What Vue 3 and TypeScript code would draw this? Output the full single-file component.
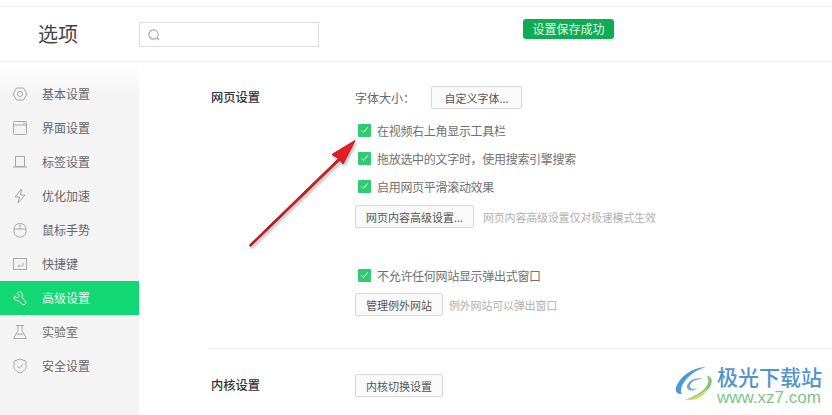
<script setup lang="ts">
interface NavItem { label: string; icon: string; active?: boolean }
const nav: NavItem[] = [
  { label: '基本设置', icon: 'base' },
  { label: '界面设置', icon: 'window' },
  { label: '标签设置', icon: 'tab' },
  { label: '优化加速', icon: 'bolt' },
  { label: '鼠标手势', icon: 'mouse' },
  { label: '快捷键', icon: 'key' },
  { label: '高级设置', icon: 'wrench', active: true },
  { label: '实验室', icon: 'flask' },
  { label: '安全设置', icon: 'shield' },
]
</script>

<template>
  <div class="page">
    <header class="top">
      <h1 class="title">选项</h1>
      <div class="search">
        <svg width="14" height="14" viewBox="0 0 14 14" fill="none" stroke="#a8a8a8" stroke-width="1.2">
          <circle cx="6.5" cy="6.5" r="4.6" />
          <path d="M10 10l2 2" />
        </svg>
      </div>
    </header>
    <div class="toast">设置保存成功</div>
    <div class="body">
      <aside class="side">
        <div v-for="item in nav" :key="item.label" class="nav" :class="{ active: item.active }">
          <svg class="ico" width="16" height="16" viewBox="0 0 16 16" fill="none" stroke="currentColor" stroke-width="1">
            <template v-if="item.icon === 'base'">
              <path d="M4.5 2h7L15 8l-3.500 6h-7L1 8z" />
              <circle cx="8" cy="8" r="2.500" />
            </template>
            <template v-else-if="item.icon === 'window'">
              <rect x="1.500" y="1.500" width="13" height="13" rx="1" />
              <path d="M1.500 5h13M11 3.300h2" />
            </template>
            <template v-else-if="item.icon === 'tab'">
              <path d="M3.500 2.500h9v10h-9zM1 13h14" />
            </template>
            <template v-else-if="item.icon === 'bolt'">
              <path d="M9.500 1L3 9h4.500L6 15l7-8H8.500z" />
            </template>
            <template v-else-if="item.icon === 'mouse'">
              <rect x="2" y="1.500" width="12" height="13.500" rx="5.500" />
              <path d="M2 7h12M8 1.500V7" />
            </template>
            <template v-else-if="item.icon === 'key'">
              <rect x="1.500" y="2.500" width="13" height="11" />
              <path d="M11 7v3H6M7.500 8.500L6 10l1.500 1" stroke-width=".8" />
            </template>
            <template v-else-if="item.icon === 'wrench'">
              <path d="M6 1.500L4 3.500l2.500 2.500-2.500 2L1.500 6c-1 3 1 5 3.500 4.500L9.500 14.500c1.500 1 3.500-.5 3.500-2.500L9 7.500C10 4 8.500 1.500 6 1.500z" transform="translate(1 0)" />
            </template>
            <template v-else-if="item.icon === 'flask'">
              <path d="M4 1.500h8M6 1.500v5L1.500 14.500h13L10 6.500v-5M4.500 10h7" />
            </template>
            <template v-else>
              <path d="M8 1l6 2.200v5.300c0 3-3 5.500-6 6.500-3-1-6-3.500-6-6.500V3.200z" />
              <path d="M5 8l2.200 2.200L11 6.500" />
            </template>
          </svg>
          <span class="nav-t">{{ item.label }}</span>
        </div>
      </aside>
      <main class="main">
        <section class="section first">
          <h2 class="heading">网页设置</h2>
          <div class="controls">
            <div class="row font">
              <span class="lab">字体大小：</span>
              <button class="btn w91">自定义字体...</button>
            </div>
            <label class="check"><i class="box"><svg width="9" height="8" viewBox="0 0 9 8" fill="none" stroke="#fff" stroke-width="1"><path d="M1 4l2.500 2.500L8 1" /></svg></i>在视频右上角显示工具栏</label>
            <label class="check"><i class="box"><svg width="9" height="8" viewBox="0 0 9 8" fill="none" stroke="#fff" stroke-width="1"><path d="M1 4l2.500 2.500L8 1" /></svg></i>拖放选中的文字时，使用搜索引擎搜索</label>
            <label class="check"><i class="box"><svg width="9" height="8" viewBox="0 0 9 8" fill="none" stroke="#fff" stroke-width="1"><path d="M1 4l2.500 2.500L8 1" /></svg></i>启用网页平滑滚动效果</label>
            <div class="row adv">
              <button class="btn w119">网页内容高级设置...</button>
              <span class="hint">网页内容高级设置仅对极速模式生效</span>
            </div>
            <label class="check popup"><i class="box"><svg width="9" height="8" viewBox="0 0 9 8" fill="none" stroke="#fff" stroke-width="1"><path d="M1 4l2.500 2.500L8 1" /></svg></i>不允许任何网站显示弹出式窗口</label>
            <div class="row exc">
              <button class="btn w88">管理例外网站</button>
              <span class="hint">例外网站可以弹出窗口</span>
            </div>
          </div>
        </section>
        <section class="section kernel">
          <h2 class="heading">内核设置</h2>
          <div class="controls">
            <button class="btn w88">内核切换设置</button>
          </div>
        </section>
      </main>
    </div>
    <svg class="arrow" width="130" height="120" viewBox="240 130 130 120">
      <defs>
        <linearGradient id="ag" x1="0" y1="1" x2="1" y2="0">
          <stop offset="0" stop-color="#a81a1e" />
          <stop offset="1" stop-color="#f01c24" />
        </linearGradient>
        <filter id="as" x="-20%" y="-20%" width="140%" height="140%">
          <feDropShadow dx="1.500" dy="2" stdDeviation="1.500" flood-color="#000" flood-opacity=".3" />
        </filter>
      </defs>
      <path d="M249.500 245L338.500 158.500L332 154.500L355 140.500L343 164L340 160L250.500 246.500z" fill="url(#ag)" stroke="#b8181d" stroke-width="1" stroke-linejoin="round" filter="url(#as)" />
    </svg>
    <div class="mark">
      <svg width="44" height="42" viewBox="0 0 56 48" preserveAspectRatio="none" fill="none">
        <path d="M40 3C22 4 6 14 1 27c-1 5 3 8 8 7C4 28 14 10 40 3z" fill="#4a9bd4" />
        <path d="M15 26c2-8 12-11 21-9-9 0-16 3-17 8 0 4 6 4 9 2-3 4-12 5-13-1z" fill="#6aa9d8" />
        <path d="M40 13c6 1 9 5 5 12-4 8-18 14-33 16 14-4 27-11 30-19 1-4 0-7-2-9z" fill="#7cc67a" />
        <path d="M12 41c12-2 24-7 30-15-3 10-14 17-30 15z" fill="#d9d96a" />
      </svg>
      <div class="mark-t">
        <div class="mark-cn">极光下载站</div>
        <div class="mark-en">www.xz7.com</div>
      </div>
    </div>
  </div>
</template>

<style>
html, body { margin: 0; padding: 0; background: #fff; overflow: hidden; }
</style>

<style scoped>
.page {
  position: relative;
  width: 832px;
  height: 415px;
  overflow: hidden;
  background: #fff;
  font-family: "Noto Sans CJK SC", "Liberation Sans", sans-serif;
  font-size: 12px;
  color: #555;
}
.top {
  box-sizing: border-box;
  height: 56px;
  margin-top: 6px;
  border-top: 1px solid #eee;
  border-bottom: 1px solid #eee;
  display: flex;
  align-items: center;
  padding-left: 38px;
}
.title { margin: -1px 0 0; width: 101px; font-size: 20px; font-weight: 400; color: #444; line-height: 28px; }
.search {
  box-sizing: border-box;
  width: 180px;
  height: 25px;
  margin-top: 1px;
  border: 1px solid #ddd;
  display: flex;
  align-items: center;
  padding-left: 7px;
}
.toast {
  position: absolute;
  left: 523px;
  top: 19px;
  width: 91px;
  height: 20px;
  border-radius: 3px;
  background: #10ac53;
  color: #e4f6ea;
  text-align: center;
  line-height: 20px;
}
.body { display: flex; height: 353px; }
.side {
  width: 139px;
  padding-top: 15px;
  background: linear-gradient(#fff 0, #f4f4f4 34px);
  flex: none;
}
.nav {
  height: 34px;
  display: flex;
  align-items: center;
  padding-left: 12px;
  gap: 14px;
  color: #666;
}
.nav-t { margin-bottom: 2px; }
.ico { color: #a6a6a6; flex: none; }
.nav.active { background: #12d873; color: #e8fbf0; }
.nav.active .ico { color: #e8fbf0; }
.main { flex: 1; padding-left: 69px; }
.section { display: flex; }
.first { padding: 24px 0 32px 3px; border-bottom: 1px solid #f1f1f1; }
.kernel { padding: 25px 0 0 3px; }
.heading {
  margin: 0;
  width: 144px;
  flex: none;
  font-size: 12.25px;
  font-weight: 500;
  color: #333;
  line-height: 23px;
}
.controls { display: flex; flex-direction: column; align-items: flex-start; }
.row { display: flex; align-items: center; }
.font .lab { width: 76px; color: #666; }
.btn {
  box-sizing: border-box;
  height: 23px;
  padding: 0;
  border: 1px solid #d8d8d8;
  border-radius: 2px;
  background: #fafafa;
  font: inherit;
  font-size: 11px;
  color: #555;
}
.w91 { width: 91px; }
.w119 { width: 119px; }
.w88 { width: 88px; }
.check {
  height: 28px;
  display: flex;
  align-items: center;
  padding-left: 3px;
  gap: 6px;
  color: #707070;
  letter-spacing: -.3px;
}
.font + .check { margin-top: 7px; }
.box {
  width: 13px;
  height: 13px;
  background: #2ecc71;
  display: flex;
  align-items: center;
  justify-content: center;
  border-radius: 1px;
}
.adv { margin-top: 5px; gap: 9px; }
.hint { color: #b0b0b0; font-size: 11px; letter-spacing: -.2px; }
.popup { margin-top: 33px; }
.exc { margin-top: 4px; gap: 6px; }
.arrow { position: absolute; left: 240px; top: 130px; }
.mark {
  position: absolute;
  left: 675px;
  top: 364px;
  display: flex;
}
.mark-t { margin-left: -2px; }
.mark-cn { font-size: 21px; font-weight: 500; color: #5195cb; line-height: 24px; }
.mark-en { font-size: 17px; color: #7cc68a; line-height: 19px; font-family: "Liberation Sans", sans-serif; }
</style>
